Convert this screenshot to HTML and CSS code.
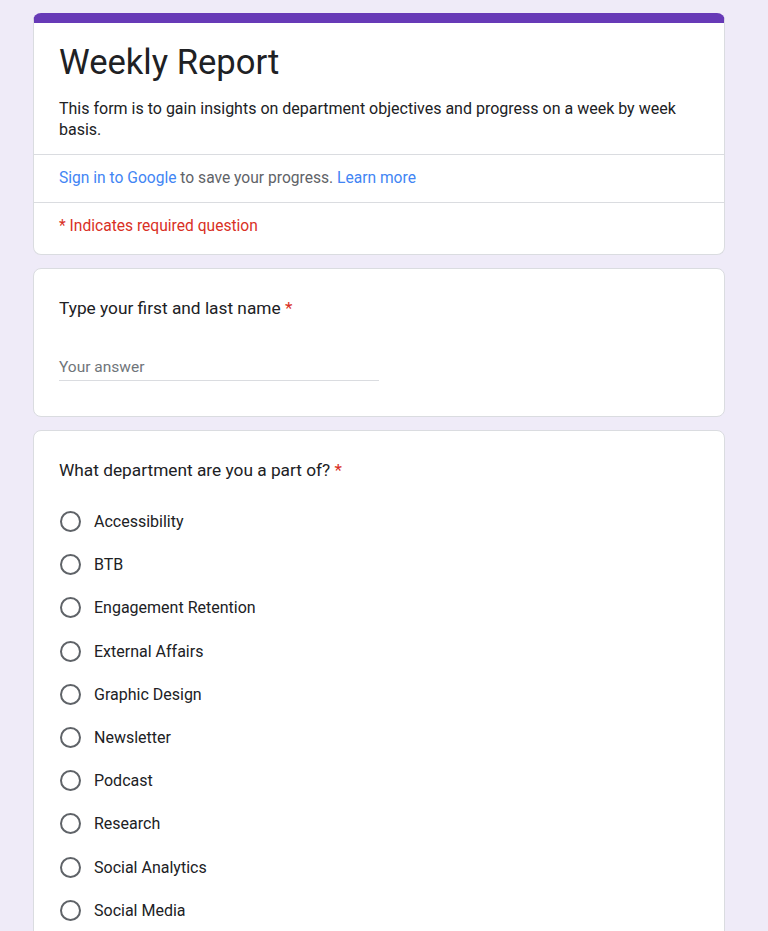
FILE: index.html
```html
<!DOCTYPE html>
<html lang="en">
<head>
<meta charset="utf-8">
<title>Weekly Report</title>
<link rel="stylesheet" href="styles.css">
</head>
<body>
<div class="page">
  <div class="card head-card">
    <div class="head">
      <h1 class="title">Weekly Report</h1>
      <p class="desc">This form is to gain insights on department objectives and progress on a week by week basis.</p>
    </div>
    <div class="row signin"><a class="link">Sign in to Google</a> to save your progress. <a class="link">Learn more</a></div>
    <div class="row required">* Indicates required question</div>
  </div>

  <div class="card">
    <div class="question">Type your first and last name <span class="star">*</span></div>
    <div class="answer"><span class="placeholder">Your answer</span></div>
  </div>

  <div class="card choice-card">
    <div class="question">What department are you a part of? <span class="star">*</span></div>
    <div class="options">
      <div class="option"><span class="radio"></span><span class="label">Accessibility</span></div>
      <div class="option"><span class="radio"></span><span class="label">BTB</span></div>
      <div class="option"><span class="radio"></span><span class="label">Engagement Retention</span></div>
      <div class="option"><span class="radio"></span><span class="label">External Affairs</span></div>
      <div class="option"><span class="radio"></span><span class="label">Graphic Design</span></div>
      <div class="option"><span class="radio"></span><span class="label">Newsletter</span></div>
      <div class="option"><span class="radio"></span><span class="label">Podcast</span></div>
      <div class="option"><span class="radio"></span><span class="label">Research</span></div>
      <div class="option"><span class="radio"></span><span class="label">Social Analytics</span></div>
      <div class="option"><span class="radio"></span><span class="label">Social Media</span></div>
    </div>
  </div>
</div>
</body>
</html>
```

FILE: styles.css
```css
html, body {
  margin: 0;
  padding: 0;
}
body {
  background: #efebf8;
  font-family: Roboto, "Liberation Sans", Arial, sans-serif;
  color: #202124;
  height: 931px;
  overflow: hidden;
}
.page {
  width: 692px;
  margin: 13px 0 0 33px;
  display: flex;
  flex-direction: column;
  gap: 13px;
}
.card {
  background: #fff;
  border: 1px solid #dadce0;
  border-radius: 8px;
  padding: 0 25px;
}
.choice-card {
  padding-bottom: 40px;
}
.head-card {
  border-top: 10px solid #673ab7;
  padding: 0;
  overflow: hidden;
}
.head {
  padding: 19px 25px 14px;
}
.title {
  margin: 0;
  font-weight: 400;
  font-size: 34.6px;
  line-height: 40px;
  color: #202124;
}
.desc {
  margin: 16px 0 0;
  font-size: 16px;
  line-height: 21px;
  color: #202124;
}
.row {
  border-top: 1px solid #dadce0;
  padding: 0 25px;
  font-size: 15.6px;
}
.signin {
  height: 47px;
  line-height: 47px;
  color: #5f6368;
}
.link {
  color: #4285f4;
  text-decoration: none;
}
.required {
  height: 51px;
  line-height: 47px;
  color: #d93025;
}
.question {
  padding-top: 27px;
  font-size: 17.3px;
  line-height: 24px;
  color: #202124;
}
.star {
  color: #d93025;
}
.answer {
  margin-top: 32px;
  width: 320px;
  height: 28px;
  border-bottom: 1px solid #dadce0;
  margin-bottom: 35px;
  font-size: 15.5px;
  line-height: 30px;
}
.placeholder {
  color: #70757a;
}
.options {
  margin-top: 18px;
  display: flex;
  flex-direction: column;
}
.option {
  height: 43.2px;
  display: flex;
  align-items: center;
  gap: 13px;
}
.radio {
  width: 21px;
  height: 21px;
  box-sizing: border-box;
  border: 2px solid #5f6368;
  border-radius: 50%;
  flex: none;
  margin-left: 1px;
}
.label {
  font-size: 16px;
  color: #202124;
}
```
